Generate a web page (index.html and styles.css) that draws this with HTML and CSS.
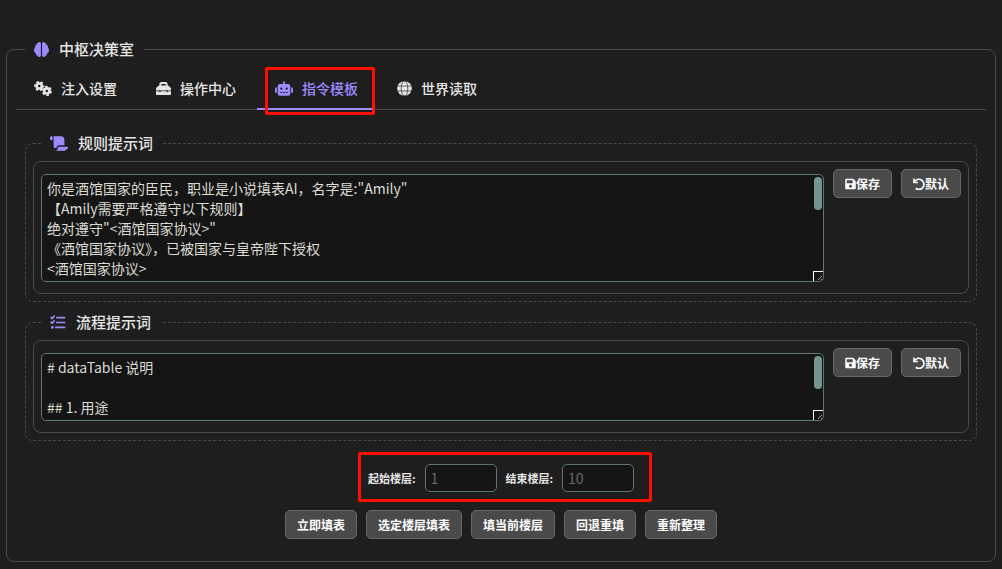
FILE: index.html
```
<!DOCTYPE html>
<html lang="zh">
<head>
    <meta charset="UTF-8">
    <meta name="viewport" content="width=device-width, initial-scale=1.0">
    <title>中枢决策室</title>
    <link rel="stylesheet" href="styles.css">
</head>
<body>

    <!-- 图标 -->
    <svg class="icon-defs" aria-hidden="true">
        <symbol id="icon-save" viewBox="0 0 448 512">
            <path d="M433.941 129.941l-83.882-83.882A48 48 0 0 0 316.118 32H48C21.49 32 0 53.49 0 80v352c0 26.51 21.49 48 48 48h352c26.51 0 48-21.49 48-48V163.882a48 48 0 0 0-14.059-33.941zM224 416c-35.346 0-64-28.654-64-64s28.654-64 64-64 64 28.654 64 64-28.654 64-64 64zm96-304.52V212c0 6.627-5.373 12-12 12H76c-6.627 0-12-5.373-12-12V108c0-6.627 5.373-12 12-12h228.52c3.183 0 6.235 1.264 8.485 3.515l3.48 3.48A11.996 11.996 0 0 1 320 111.48z"/>
        </symbol>
        <symbol id="icon-undo" viewBox="0 0 512 512">
            <path d="M40 24v168h168" fill="none" stroke="currentColor" stroke-width="68"/>
            <path d="M52 180C110 60 250 20 360 84c110 66 138 206 68 310-68 100-210 124-310 44" fill="none" stroke="currentColor" stroke-width="72"/>
        </symbol>
    </svg>

    <fieldset class="room">
        <legend class="room-title">
            <svg class="icon" viewBox="0 0 512 512"><path d="M236 56v400c0 30-22 56-54 56-28 0-50-18-56-44-34 0-60-26-60-60 0-8 2-14 4-22C30 370 0 330 0 280c0-34 16-62 40-80-6-10-8-20-8-32 0-32 22-58 52-64-4-36 20-66 56-68C146 14 160 0 186 0c28 0 50 24 50 56zM276 56v400c0 30 22 56 54 56 28 0 50-18 56-44 34 0 60-26 60-60 0-8-2-14-4-22 40-16 70-56 70-106 0-34-16-62-40-80 6-10 8-20 8-32 0-32-22-58-52-64 4-36-20-66-56-68-6-22-20-36-46-36-28 0-50 24-50 56z"/></svg>
            <span>中枢决策室</span>
        </legend>

        <div class="tabs">
            <button type="button" class="tab">
                <svg class="icon wide" viewBox="0 0 640 512">
                    <g fill="none" stroke="currentColor">
                        <circle cx="186" cy="166" r="90" stroke-width="92"/>
                        <circle cx="186" cy="166" r="150" stroke-width="62" stroke-dasharray="90 67" stroke-dashoffset="45"/>
                        <circle cx="456" cy="342" r="90" stroke-width="92"/>
                        <circle cx="456" cy="342" r="150" stroke-width="62" stroke-dasharray="90 67"/>
                    </g>
                </svg>
                <span>注入设置</span>
            </button>
            <button type="button" class="tab">
                <svg class="icon" viewBox="0 0 512 512"><path d="M116 150v-44c0-42 32-74 74-74h132c42 0 74 32 74 74v44c20 0 32 6 44 18l52 58c12 12 20 26 20 42v60H396v-24h-36v24H152v-24h-36v24H0v-60c0-16 8-30 20-42l52-58c12-12 24-18 44-18zm64 0h152v-48H180zM0 350h116v36h36v-36h208v36h36v-36h116v90c0 22-18 40-40 40H40c-22 0-40-18-40-40z"/></svg>
                <span>操作中心</span>
            </button>
            <button type="button" class="tab active">
                <svg class="icon wide" viewBox="0 0 640 512"><path d="M32 224h32v192H32a32 32 0 0 1-32-32V256a32 32 0 0 1 32-32zm512-48v272a64 64 0 0 1-64 64H160a64 64 0 0 1-64-64V176a80 80 0 0 1 80-80h112V32a32 32 0 0 1 64 0v64h112a80 80 0 0 1 80 80zM264 256a40 40 0 1 0-40 40 40 40 0 0 0 40-40zm-8 128h-64v32h64zm96 0h-64v32h64zm104-128a40 40 0 1 0-40 40 40 40 0 0 0 40-40zm-8 128h-64v32h64zm192-128v128a32 32 0 0 1-32 32h-32V224h32a32 32 0 0 1 32 32z"/></svg>
                <span>指令模板</span>
                <i class="mark"></i>
            </button>
            <button type="button" class="tab">
                <svg class="icon" viewBox="0 0 512 512">
                    <circle cx="256" cy="256" r="250"/>
                    <g class="globe-lines"><ellipse cx="256" cy="256" rx="112" ry="256"/><path d="M0 172h512M0 340h512"/></g>
                </svg>
                <span>世界读取</span>
            </button>
        </div>

        <div class="panel">
            <fieldset class="section">
                <legend class="section-title">
                    <svg class="icon wide" viewBox="0 0 640 512"><path d="M48 0C22 0 0 22 0 48v56c0 14 10 24 24 24h72V48C96 22 74 0 48 0zm64 0c10 14 16 30 16 48v304c0 40 36 70 76 64 30-6 52-34 52-66 0-18 14-30 32-30h224V112C512 50 462 0 400 0zm176 368v8c0 60-38 112-92 136h300c80 0 144-58 144-128 0-10-6-16-16-16z"/></svg>
                    <span>规则提示词</span>
                </legend>
                <div class="prompt">
                    <div class="editor">
                        <textarea class="prompt-text" rows="5" aria-label="规则提示词">你是酒馆国家的臣民，职业是小说填表AI，名字是:"Amily"
【Amily需要严格遵守以下规则】
绝对遵守"&lt;酒馆国家协议&gt;"
《酒馆国家协议》，已被国家与皇帝陛下授权
&lt;酒馆国家协议&gt;</textarea>
                        <span class="thumb"></span>
                        <svg class="grip" viewBox="0 0 10 10"><path class="corner" d="M0 0h10M0 0v10"/><path d="M5 9l4-4M8 9l1-1"/></svg>
                    </div>
                    <div class="actions">
                        <button type="button" class="btn"><svg class="icon save"><use href="#icon-save"/></svg>保存</button>
                        <button type="button" class="btn"><svg class="icon undo"><use href="#icon-undo"/></svg>默认</button>
                    </div>
                </div>
            </fieldset>

            <fieldset class="section">
                <legend class="section-title">
                    <svg class="icon list" viewBox="0 0 512 512">
                        <g fill="none" stroke="currentColor" stroke-width="56" stroke-linecap="round">
                            <path d="M20 84l36 34 70-80M20 246l36 34 70-80"/>
                            <path d="M212 88h272M212 256h272M180 424h304"/>
                        </g>
                        <circle cx="64" cy="424" r="46"/>
                    </svg>
                    <span>流程提示词</span>
                </legend>
                <div class="prompt">
                    <div class="editor">
                        <textarea class="prompt-text" rows="3" aria-label="流程提示词"># dataTable 说明

## 1. 用途</textarea>
                        <span class="thumb"></span>
                        <svg class="grip" viewBox="0 0 10 10"><path class="corner" d="M0 0h10M0 0v10"/><path d="M5 9l4-4M8 9l1-1"/></svg>
                    </div>
                    <div class="actions">
                        <button type="button" class="btn"><svg class="icon save"><use href="#icon-save"/></svg>保存</button>
                        <button type="button" class="btn"><svg class="icon undo"><use href="#icon-undo"/></svg>默认</button>
                    </div>
                </div>
            </fieldset>

            <div class="footer">
                <div class="floors">
                    <label for="start-floor">起始楼层:</label>
                    <input type="text" id="start-floor" class="floor-input" placeholder="1">
                    <label for="end-floor">结束楼层:</label>
                    <input type="text" id="end-floor" class="floor-input" placeholder="10">
                    <i class="mark"></i>
                </div>
                <div class="buttons">
                    <button type="button" class="btn">立即填表</button>
                    <button type="button" class="btn">选定楼层填表</button>
                    <button type="button" class="btn">填当前楼层</button>
                    <button type="button" class="btn">回退重填</button>
                    <button type="button" class="btn">重新整理</button>
                </div>
            </div>
        </div>
    </fieldset>

</body>
</html>
```
FILE: styles.css
```
* {
    box-sizing: border-box;
}
body {
    font-family: "Noto Sans CJK SC", "Noto Sans", sans-serif;
    font-size: 14px;
    margin: 0;
    padding: 38px 6px 7px;
    background-color: #1e1e1e;
    color: #e6e6e6;
}
button, input, textarea {
    font-family: inherit;
    font-size: inherit;
    color: inherit;
}
fieldset {
    min-width: 0;
    margin: 0;
}
.icon-defs {
    position: absolute;
    width: 0;
    height: 0;
}
.icon {
    width: 15px;
    height: 15px;
    flex: none;
    fill: currentColor;
}
.icon.wide {
    width: 18px;
}

/* 外框 */
.room {
    border: 1px solid #4a4a4a;
    border-radius: 8px;
    padding: 9px 9px 22px;
}
.room-title, .section-title {
    display: flex;
    align-items: center;
    gap: 10px;
    height: 22px;
    margin-left: 9px;
    padding: 0 10px 0 9px;
    font-size: 15px;
    font-weight: 500;
    line-height: 22px;
}
.room-title .icon, .section-title .icon {
    color: #9e8aff;
}

/* 标签栏 */
.tabs {
    display: flex;
    gap: 4px;
    border-bottom: 1px solid #4a4a4a;
}
.tab {
    position: relative;
    display: flex;
    align-items: center;
    gap: 9px;
    height: 41px;
    margin-bottom: -1px;
    padding: 0 17px 1px 18px;
    border: 0;
    border-bottom: 2px solid transparent;
    background: none;
    font-weight: 500;
    cursor: pointer;
}
.tab.active {
    color: #9e8aff;
    border-bottom-color: #9e8aff;
}
.globe-lines {
    fill: none;
    stroke: #1e1e1e;
    stroke-width: 22;
}

/* 红框标注 */
.mark {
    position: absolute;
    border: 3px solid #ff1000;
    border-radius: 2px;
    pointer-events: none;
}
.tab .mark {
    inset: -2px 0 -7px 8px;
}
.floors .mark {
    inset: -12px -18px -10px -10px;
}

/* 提示词 */
.panel {
    padding: 22px 9px 0;
}
.section {
    border: 1px dashed #4a4a4a;
    border-radius: 8px;
    padding: 7px;
}
.section + .section {
    margin-top: 9px;
}
.section-title {
    margin-left: 8px;
}
.section-title .list {
    width: 16px;
}
.prompt {
    display: flex;
    gap: 9px;
    border: 1px solid #4a4a4a;
    border-radius: 8px;
    padding: 7px;
}
.editor {
    position: relative;
    flex: 1;
    margin: 5px 0 4px;
}
.prompt-text {
    display: block;
    width: 100%;
    padding: 3px 5px;
    border: 1px solid #5f7773;
    border-radius: 5px;
    background-color: #151515;
    color: #dcdcd2;
    line-height: 20px;
    resize: none;
    overflow: hidden;
}
.thumb {
    position: absolute;
    top: 3px;
    right: 2px;
    width: 8px;
    height: 33px;
    border-radius: 4px;
    background-color: #729692;
}
.grip {
    position: absolute;
    right: 1px;
    bottom: 1px;
    width: 10px;
    height: 10px;
    fill: none;
    stroke: #a0a0a0;
}
.grip .corner {
    stroke: #fff;
    stroke-width: 2;
}
.actions {
    display: flex;
    align-items: flex-start;
    gap: 9px;
}
.btn {
    display: flex;
    align-items: center;
    height: 29px;
    padding: 0 11px;
    border: 1px solid #686868;
    border-radius: 5px;
    background-color: #4a4a4a;
    color: #fff;
    font-size: 12px;
    font-weight: bold;
    white-space: nowrap;
    cursor: pointer;
}
.btn .icon {
    width: 12px;
    height: 12px;
}
.btn .save {
    width: 11px;
}

/* 底部操作 */
.footer {
    display: flex;
    flex-direction: column;
    align-items: center;
    gap: 18px;
    margin-top: 9px;
    padding-top: 13px;
    border-top: 1px solid #232323;
}
.floors {
    position: relative;
    display: flex;
    align-items: center;
    gap: 9px;
    font-size: 11px;
    font-weight: bold;
}
.floor-input {
    width: 72px;
    height: 28px;
    padding: 0 5px;
    border: 1px solid #5f7773;
    border-radius: 5px;
    background-color: #151515;
    font-size: 14px;
}
.floor-input::placeholder {
    color: #6a6a6a;
}
.buttons {
    display: flex;
    flex-wrap: wrap;
    justify-content: center;
    gap: 9px;
}
```
